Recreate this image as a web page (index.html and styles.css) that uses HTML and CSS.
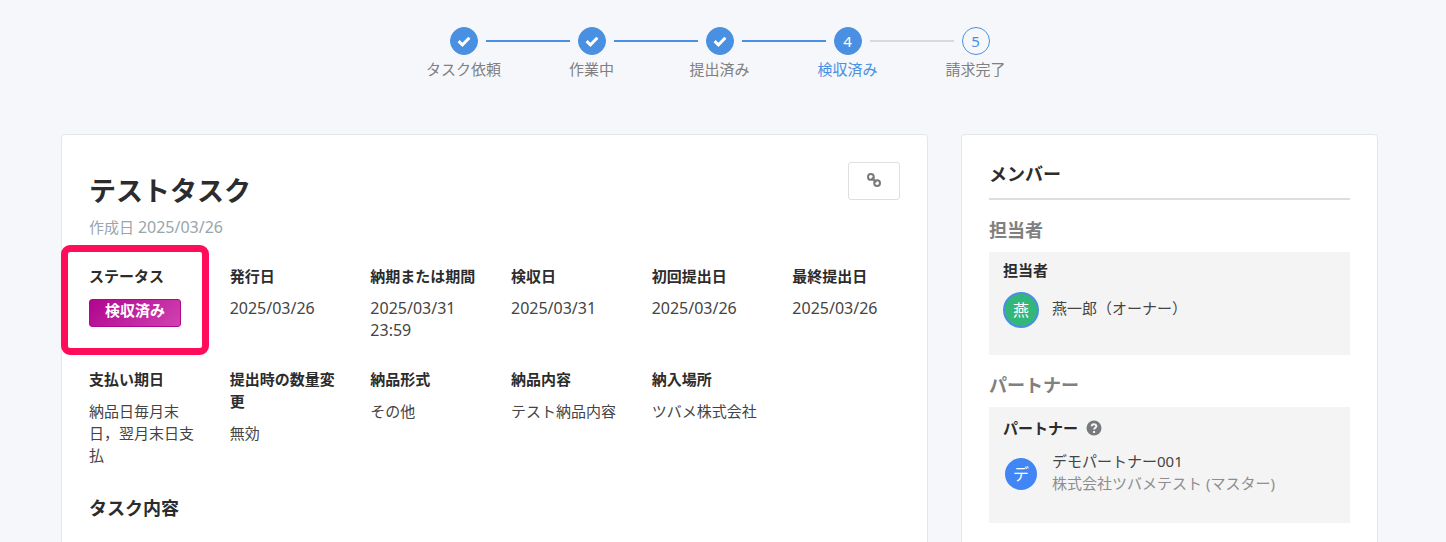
FILE: index.html
```html
<!DOCTYPE html>
<html lang="ja">
<head>
<meta charset="utf-8">
<meta name="viewport" content="width=device-width, initial-scale=1">
<title>テストタスク</title>
<link rel="stylesheet" href="styles.css">
</head>
<body>
<div class="page">
  <ol class="steps">
    <li class="step done">
      <span class="dot"><svg viewBox="0 0 14 12" width="14" height="12"><path d="M1.6 6.2 5.4 9.8 12.4 2.8"/></svg></span>
      <span class="step-name">タスク依頼</span>
    </li>
    <li class="step done">
      <span class="dot"><svg viewBox="0 0 14 12" width="14" height="12"><path d="M1.6 6.2 5.4 9.8 12.4 2.8"/></svg></span>
      <span class="step-name">作業中</span>
    </li>
    <li class="step done">
      <span class="dot"><svg viewBox="0 0 14 12" width="14" height="12"><path d="M1.6 6.2 5.4 9.8 12.4 2.8"/></svg></span>
      <span class="step-name">提出済み</span>
    </li>
    <li class="step current" aria-current="step">
      <span class="dot">4</span>
      <span class="step-name">検収済み</span>
    </li>
    <li class="step">
      <span class="dot">5</span>
      <span class="step-name">請求完了</span>
    </li>
  </ol>

  <div class="columns">
    <main class="card">
      <header class="task-head">
        <div>
          <h1 class="task-title">テストタスク</h1>
          <p class="created">作成日 <time class="num">2025/03/26</time></p>
        </div>
        <button class="link-button" type="button" aria-label="リンクをコピー">
          <svg viewBox="0 0 14 14" width="14" height="14"><circle cx="3.9" cy="3.9" r="2.9"/><circle cx="10.1" cy="10.1" r="2.9"/><path d="M4.8 4.8 9.2 9.2"/></svg>
        </button>
      </header>

      <dl class="details">
        <div class="detail marked"><dt>ステータス</dt><dd><span class="badge">検収済み</span></dd></div>
        <div class="detail"><dt>発行日</dt><dd class="num">2025/03/26</dd></div>
        <div class="detail"><dt>納期または期間</dt><dd class="num">2025/03/31 23:59</dd></div>
        <div class="detail"><dt>検収日</dt><dd class="num">2025/03/31</dd></div>
        <div class="detail"><dt>初回提出日</dt><dd class="num">2025/03/26</dd></div>
        <div class="detail"><dt>最終提出日</dt><dd class="num">2025/03/26</dd></div>
        <div class="detail"><dt>支払い期日</dt><dd>納品日毎月末日，翌月末日支払</dd></div>
        <div class="detail"><dt>提出時の数量変更</dt><dd>無効</dd></div>
        <div class="detail"><dt>納品形式</dt><dd>その他</dd></div>
        <div class="detail"><dt>納品内容</dt><dd>テスト納品内容</dd></div>
        <div class="detail"><dt>納入場所</dt><dd>ツバメ株式会社</dd></div>
      </dl>

      <h2 class="section-title">タスク内容</h2>
    </main>

    <aside class="card">
      <h2 class="members-title">メンバー</h2>

      <h3 class="group-title">担当者</h3>
      <section class="group">
        <h4 class="role">担当者</h4>
        <div class="person">
          <span class="avatar owner">燕</span>
          <p class="person-text">燕一郎（オーナー）</p>
        </div>
      </section>

      <h3 class="group-title">パートナー</h3>
      <section class="group partner-group">
        <h4 class="role">パートナー
          <svg class="help" viewBox="0 0 16 16" width="16" height="16"><circle cx="8" cy="8" r="7.5"/><path d="M5.7 6.3C5.8 3.4 10.4 3.6 10.3 6.2 10.2 7.8 8.1 7.7 8.1 9.6M8.1 11v2"/></svg>
        </h4>
        <div class="person">
          <span class="avatar partner">デ</span>
          <p class="person-text">デモパートナー001<br><span class="company">株式会社ツバメテスト (マスター)</span></p>
        </div>
      </section>
    </aside>
  </div>
</div>
</body>
</html>
```
FILE: styles.css
```css
*,
*::before,
*::after {
  box-sizing: border-box;
}

body {
  margin: 0;
  background: #f5f7fb;
  color: #2c2c2c;
  font: 15px/22px "Noto Sans", "Noto Sans CJK JP", sans-serif;
}

h1, h2, h3, h4, p, ol, dl, dd {
  margin: 0;
  padding: 0;
}

.page {
  padding: 27px 68px 0 61px;
}

/* Progress steps */
.steps {
  display: flex;
  justify-content: center;
  list-style: none;
}

.step {
  position: relative;
  width: 128px;
  display: flex;
  flex-direction: column;
  align-items: center;
  gap: 3px;
  color: #808080;
}

.step:not(:last-child)::after {
  content: "";
  position: absolute;
  top: 13px;
  left: calc(50% + 22px);
  width: calc(100% - 44px);
  height: 2px;
  background: #d8d9dc;
}

.step.done::after {
  background: #4a90e2;
}

.dot {
  display: flex;
  align-items: center;
  justify-content: center;
  width: 28px;
  height: 28px;
  border: 1px solid #4a90e2;
  border-radius: 50%;
  color: #4a90e2;
}

.done .dot,
.current .dot {
  background: #4a90e2;
  color: #fff;
}

.dot svg {
  fill: none;
  stroke: #fff;
  stroke-width: 3;
}

.current .step-name {
  color: #4a90e2;
}

/* Cards */
.columns {
  display: grid;
  grid-template-columns: 867fr 417fr;
  gap: 33px;
  margin-top: 54px;
}

.card {
  min-width: 0;
  padding: 27px;
  background: #fff;
  border: 1px solid #e4e6e9;
  border-radius: 4px;
}

.task-head {
  display: flex;
  justify-content: space-between;
  align-items: flex-start;
}

.task-title {
  margin-top: 9px;
  font-size: 27px;
  line-height: 40px;
}

.created {
  margin-top: 5px;
  color: #98a6ad;
}

.num {
  font-size: 16px;
}

.link-button {
  width: 52px;
  height: 38px;
  padding: 0 0 4px;
  background: #fff;
  border: 1px solid #dfdfdf;
  border-radius: 3px;
}

.link-button svg {
  fill: none;
  stroke: #77797c;
  stroke-width: 2;
  vertical-align: middle;
}

.details {
  display: grid;
  grid-template-columns: repeat(6, minmax(0, 1fr));
  gap: 27px 33px;
  margin-top: 27px;
}

.detail {
  position: relative;
}

.detail dt {
  margin-bottom: 10px;
  font-weight: 700;
}

.detail dd {
  color: #444;
}

.marked::before {
  content: "";
  position: absolute;
  top: -20px;
  left: -28px;
  width: 148px;
  height: 110px;
  border: 7px solid #ff0d5b;
  border-radius: 9px;
}

.badge {
  display: block;
  width: 92px;
  height: 28px;
  margin-top: 12px;
  border: 1px solid #b0058f;
  border-radius: 3px;
  background: linear-gradient(135deg, #b0058f, #d042b0);
  color: #fff;
  font-weight: 700;
  line-height: 20px;
  text-align: center;
}

.section-title {
  margin-top: 28px;
  font-size: 18px;
  line-height: 28px;
}

/* Members */
.members-title {
  padding-bottom: 11px;
  border-bottom: 2px solid #dcdddf;
  font-size: 18px;
  line-height: 25px;
}

.group-title {
  margin: 16px 0 8px;
  color: #808080;
  font-size: 18px;
  line-height: 28px;
}

.group {
  min-height: 103px;
  padding: 7px 14px;
  background: #f4f4f4;
}

.partner-group {
  min-height: 116px;
  padding-top: 10px;
}

.role {
  display: flex;
  align-items: center;
  gap: 8px;
  font-size: 15px;
}

.help circle {
  fill: #77797c;
}

.help path {
  fill: none;
  stroke: #f4f4f4;
  stroke-width: 2;
}

.person {
  display: flex;
  align-items: center;
  gap: 13px;
  margin-top: 11px;
}

.person-text {
  padding-bottom: 4px;
  color: #444;
}

.avatar {
  display: flex;
  align-items: center;
  justify-content: center;
  width: 36px;
  height: 36px;
  border: 2px solid #4a90e2;
  border-radius: 50%;
  color: #fff;
  font-size: 16px;
}

.owner {
  background: #33b679;
}

.partner {
  border-color: #f4f4f4;
  background: #4285f4;
}

.company {
  color: #8c8e91;
}
```
